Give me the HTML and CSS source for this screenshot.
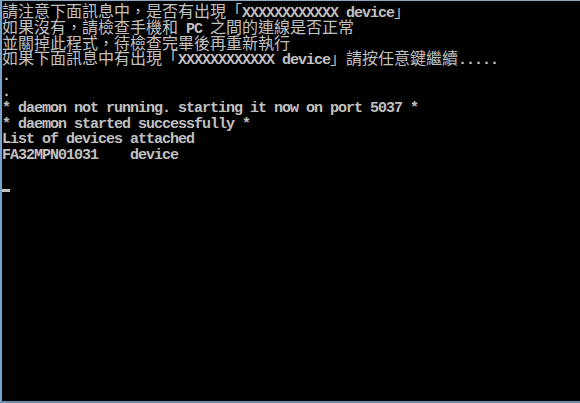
FILE: index.html
```html
<!DOCTYPE html>
<html lang="zh-Hant">
<head>
<meta charset="utf-8">
<link rel="stylesheet" href="styles.css">
</head>
<body>
<div class="console">
  <div class="ln"><span class="cj">請注意下面訊息中，是否有出現「</span><span class="as">XXXXXXXXXXXX device</span><span class="cj">」</span></div>
  <div class="ln"><span class="cj">如果沒有，請檢查手機和</span><span class="as"> PC </span><span class="cj">之間的連線是否正常</span></div>
  <div class="ln"><span class="cj">並關掉此程式，待檢查完畢後再重新執行</span></div>
  <div class="ln"><span class="cj">如果下面訊息中有出現「</span><span class="as">XXXXXXXXXXXX device</span><span class="cj">」請按任意鍵繼續</span><span class="as">.....</span></div>
  <div class="ln"><span class="as">.</span></div>
  <div class="ln"><span class="as">.</span></div>
  <div class="ln"><span class="as">* daemon not running. starting it now on port 5037 *</span></div>
  <div class="ln"><span class="as">* daemon started successfully *</span></div>
  <div class="ln"><span class="as">List of devices attached</span></div>
  <div class="ln"><span class="as">FA32MPN01031    device</span></div>
  <div class="ln"></div>
  <div class="ln cur-line"><span class="cursor"></span></div>
</div>
</body>
</html>
```
FILE: styles.css
```css
html, body {
  margin: 0;
  padding: 0;
  background: #000;
}
.console {
  box-sizing: border-box;
  width: 580px;
  height: 403px;
  padding-top: 2px;
  background: #000;
  border-top: 1px solid #8ea8c2;
  border-left: 2px solid #74a3cc;
  border-bottom: 2px solid #6a8eb0;
  color: #c0c0c0;
  overflow: hidden;
}
.ln {
  height: 15.8px;
  line-height: 15.8px;
  white-space: pre;
  font-family: "Noto Sans CJK TC", "Noto Sans CJK SC", sans-serif;
  font-size: 16px;
}
.cj {
  font-family: "Noto Sans CJK TC", "Noto Sans CJK SC", sans-serif;
  font-size: 16px;
  line-height: 15.8px;
}
.as {
  font-family: "Liberation Mono", monospace;
  font-weight: bold;
  font-size: 15px;
  letter-spacing: -1px;
  line-height: 15.8px;
}
.cur-line {
  display: flex;
  align-items: flex-end;
}
.cursor {
  display: block;
  width: 8px;
  height: 3px;
  margin-bottom: 1px;
  background: #c0c0c0;
}
```
